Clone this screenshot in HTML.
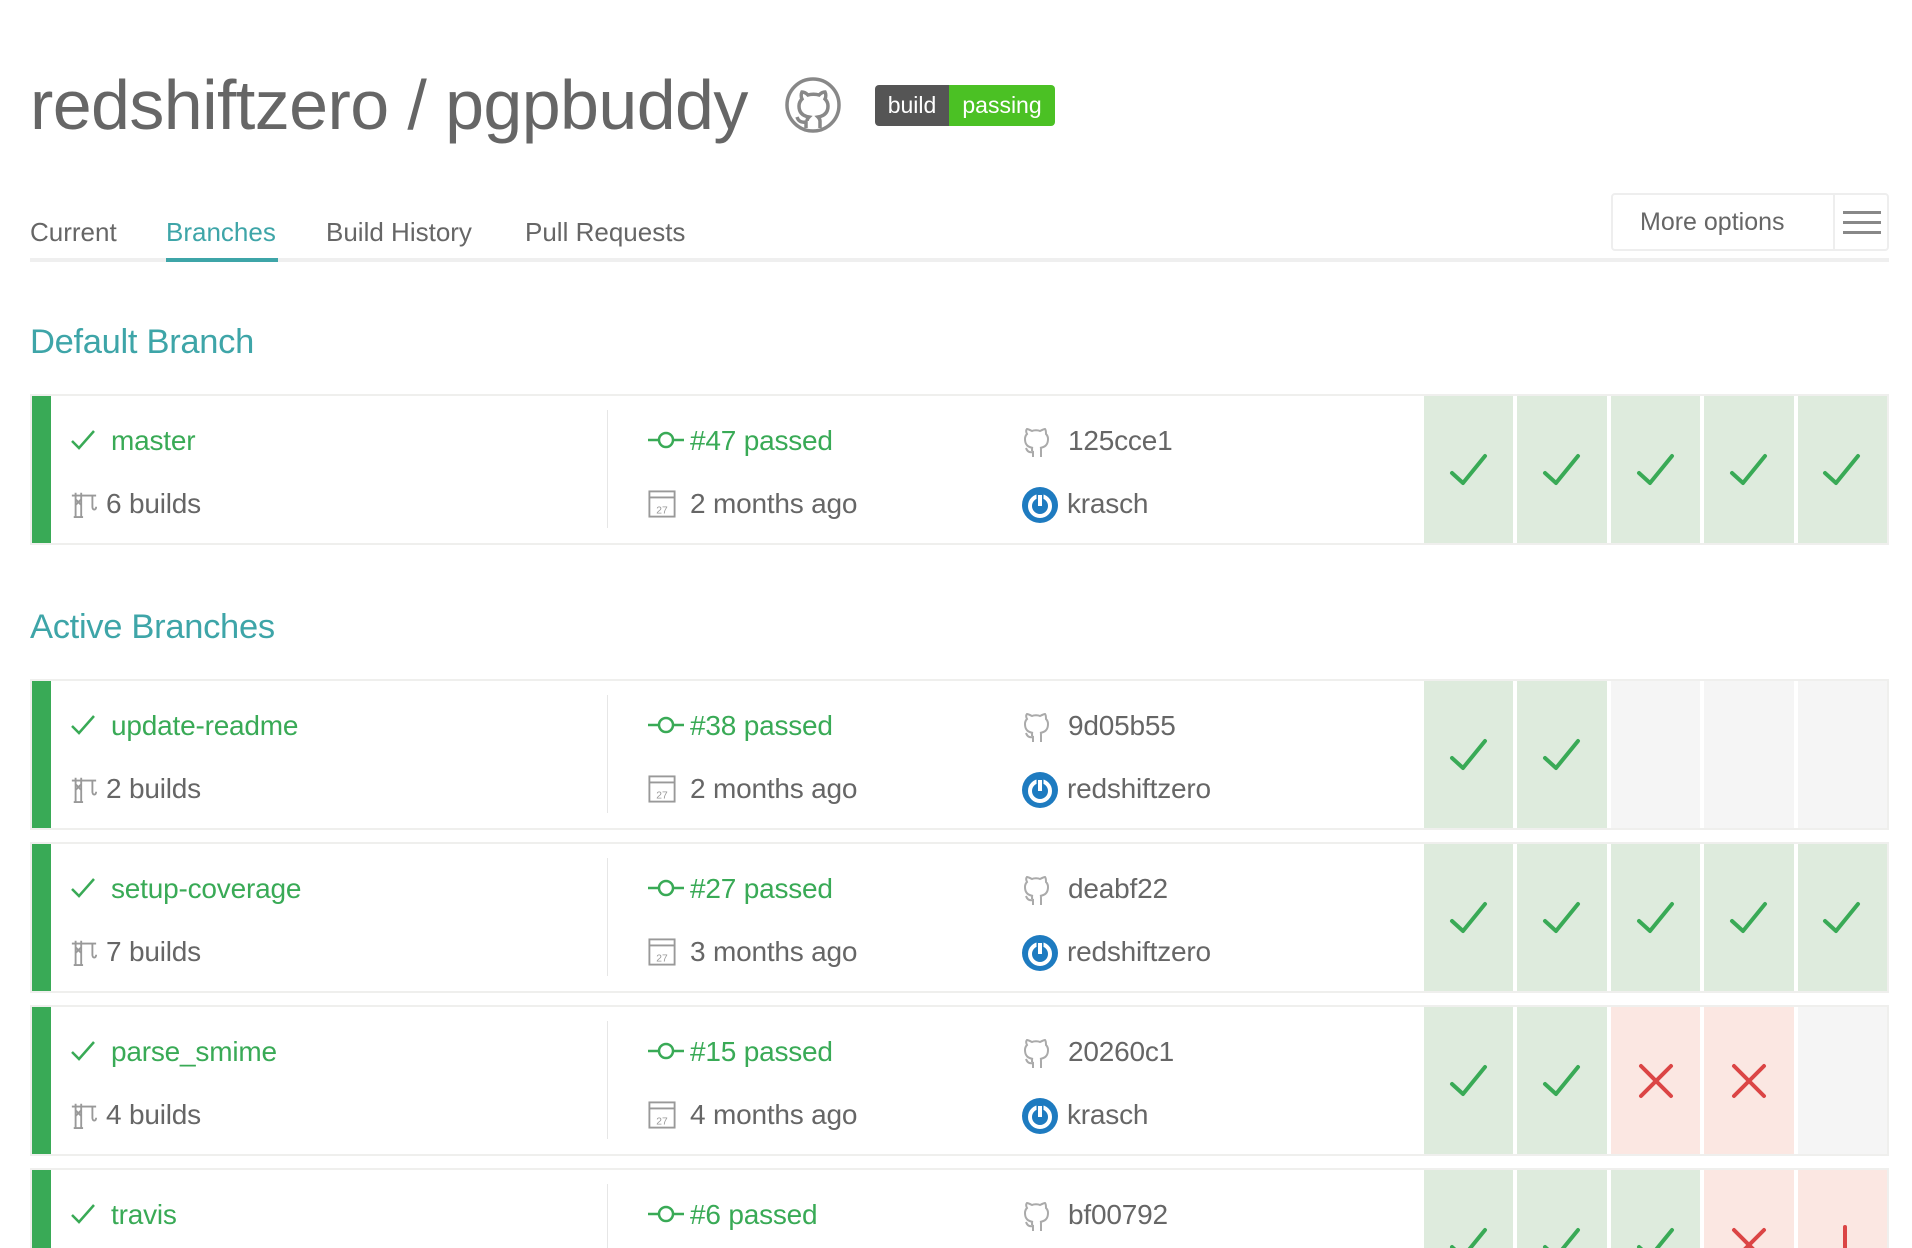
<!DOCTYPE html>
<html style="height:1248px;overflow:hidden"><head><meta charset="utf-8"><style>
body{margin:0;width:1912px;height:1248px;background:#fff;overflow:hidden;position:relative;font-family:"Liberation Sans",sans-serif;color:#666}
.a{position:absolute;white-space:nowrap}
.title{left:30px;top:62px;font-size:70px;letter-spacing:-0.6px;color:#666;line-height:86px}
.tab{top:216px;font-size:26px;line-height:32px;color:#666;letter-spacing:0px}
.h2{left:30px;font-size:34.5px;color:#3ea5a8;letter-spacing:-0.3px;line-height:40px}
.card{position:absolute;left:30px;width:1859px;height:151px;border:2px solid #efefed;box-sizing:border-box;background:#fff;overflow:hidden}
.bar{position:absolute;left:-2px;top:-2px;bottom:-2px;width:21px;background:#39aa56}
.t{position:absolute;font-size:28px;line-height:34px;white-space:nowrap;letter-spacing:-0.2px}
.g{color:#39aa56}
.div{position:absolute;left:575px;top:14px;height:118px;width:1px;background:#e6e6e6}
.cells{position:absolute;left:1392px;right:0;top:0;bottom:0;display:flex;gap:4px}
.c{flex:1;display:flex;align-items:center;justify-content:center}
.p{background:#deebdd}.f{background:#fbe7e2}.e{background:#f5f5f5}
</style></head><body>

<div class="a title">redshiftzero / pgpbuddy</div>
<svg class="a" style="left:784px;top:76px" width="58" height="58" viewBox="0 0 58 58" fill="none" stroke="#888" stroke-width="3.5">
<circle cx="29" cy="29" r="26"/>
<path d="M22 52v-6c-6 1-8-2-9-5M36 52v-7c0-2-1-3-2-4 6-1 10-4 10-11 0-3-1-5-3-7 1-2 1-5 0-7-2 0-4 1-6 3-3-1-8-1-11 0-2-2-4-3-6-3-1 2-1 5 0 7-2 2-3 4-3 7 0 7 4 10 10 11-1 1-2 2-2 4"/>
</svg>
<div class="a" style="left:875px;top:85px;width:180px;height:41px;border-radius:4px;overflow:hidden;display:flex;font-size:23px;line-height:41px;color:#fff">
<div style="background:#555;width:74px;text-align:center">build</div><div style="background:#4bc124;flex:1;text-align:center">passing</div></div>

<div class="a tab" style="left:30px">Current</div>
<div class="a tab" style="left:166px;color:#3ea5a8">Branches</div>
<div class="a tab" style="left:326px">Build History</div>
<div class="a tab" style="left:525px">Pull Requests</div>
<div class="a" style="left:30px;top:258px;width:1859px;height:4px;background:#efefef"></div>
<div class="a" style="left:166px;top:258px;width:112px;height:4px;background:#3ea5a8"></div>

<div class="a" style="left:1611px;top:193px;width:278px;height:58px;border:2px solid #eee;border-radius:4px;box-sizing:border-box">
<div class="a" style="left:27px;top:11px;font-size:25px;line-height:32px;color:#666">More options</div>
<div class="a" style="left:220px;top:0;bottom:0;width:2px;background:#eee"></div>
<div class="a" style="left:230px;top:16px;width:38px;height:3px;background:#888;box-shadow:0 10px 0 #888,0 20px 0 #888"></div>
</div>

<div class="a h2" style="top:322px">Default Branch</div>
<div class="a h2" style="top:607px">Active Branches</div>

<svg width="0" height="0" style="position:absolute">
<defs>
<symbol id="ck" viewBox="0 0 40 34"><path d="M3 20l11 10L36 3" fill="none" stroke="#39aa56" stroke-width="4" stroke-linecap="round" stroke-linejoin="round"/></symbol>
<symbol id="x" viewBox="0 0 36 36"><path d="M3 3l30 30M33 3L3 33" fill="none" stroke="#db4545" stroke-width="4" stroke-linecap="round"/></symbol>
<symbol id="sck" viewBox="0 0 26 24"><path d="M2 13l7 7L24 3" fill="none" stroke="#39aa56" stroke-width="2.5"/></symbol>
<symbol id="commit" viewBox="0 0 36 20"><path d="M0 10h10M26 10h10" stroke="#39aa56" stroke-width="2.5"/><circle cx="18" cy="10" r="7" fill="none" stroke="#39aa56" stroke-width="2.5"/></symbol>
<symbol id="cal" viewBox="0 0 30 30"><rect x="1.5" y="1.5" width="27" height="27" fill="none" stroke="#999" stroke-width="2"/><path d="M1.5 8h27" stroke="#999" stroke-width="2"/><text x="15" y="25" font-size="11" text-anchor="middle" fill="#999" font-family="Liberation Sans">27</text></symbol>
<symbol id="crane" viewBox="0 0 30 30"><path d="M2 6h26M6 3v26M12 3v26M4 29h10M6 10l6 6M12 10l-6 6M24 6v12c0 4 4 4 4 0" fill="none" stroke="#999" stroke-width="2"/></symbol>
<symbol id="gh" viewBox="0 0 30 34"><path d="M11 33v-5c-4 1-6-1-7-4M19 33v-6c0-2 0-3-1-3 5-1 8-3 8-9 0-2-1-4-2-5 0-2 0-4-1-5-1 0-3 1-5 2-2-1-6-1-8 0-2-1-4-2-5-2-1 1-1 3 0 5-1 1-2 3-2 5 0 6 3 8 8 9-1 0-1 1-1 3" fill="none" stroke="#aaa" stroke-width="2"/></symbol>
<symbol id="av" viewBox="0 0 36 36"><circle cx="18" cy="18" r="18" fill="#1e7bc0"/><circle cx="18" cy="19" r="10" fill="none" stroke="#fff" stroke-width="4"/><path d="M18 7v12" stroke="#1e7bc0" stroke-width="7"/><path d="M18 8v11" stroke="#fff" stroke-width="4"/></symbol>
</defs></svg>

<div class="card" style="top:394px">
<div class="bar"></div>
<svg class="a" style="left:38px;top:32px" width="26" height="24"><use href="#sck"/></svg>
<div class="t g" style="left:79px;top:28px">master</div>
<svg class="a" style="left:38px;top:94px" width="28" height="28"><use href="#crane"/></svg>
<div class="t" style="left:74px;top:91px">6 builds</div>
<div class="div"></div>
<svg class="a" style="left:616px;top:34px" width="36" height="20"><use href="#commit"/></svg>
<div class="t g" style="left:658px;top:28px">#47 passed</div>
<svg class="a" style="left:616px;top:94px" width="28" height="28"><use href="#cal"/></svg>
<div class="t" style="left:658px;top:91px">2 months ago</div>
<svg class="a" style="left:990px;top:28px" width="30" height="34"><use href="#gh"/></svg>
<div class="t" style="left:1036px;top:28px">125cce1</div>
<svg class="a" style="left:990px;top:91px" width="36" height="36"><use href="#av"/></svg>
<div class="t" style="left:1035px;top:91px">krasch</div>
<div class="cells"><div class="c p"><svg width="40" height="34"><use href="#ck"/></svg></div><div class="c p"><svg width="40" height="34"><use href="#ck"/></svg></div><div class="c p"><svg width="40" height="34"><use href="#ck"/></svg></div><div class="c p"><svg width="40" height="34"><use href="#ck"/></svg></div><div class="c p"><svg width="40" height="34"><use href="#ck"/></svg></div></div>
</div>

<div class="card" style="top:679px">
<div class="bar"></div>
<svg class="a" style="left:38px;top:32px" width="26" height="24"><use href="#sck"/></svg>
<div class="t g" style="left:79px;top:28px">update-readme</div>
<svg class="a" style="left:38px;top:94px" width="28" height="28"><use href="#crane"/></svg>
<div class="t" style="left:74px;top:91px">2 builds</div>
<div class="div"></div>
<svg class="a" style="left:616px;top:34px" width="36" height="20"><use href="#commit"/></svg>
<div class="t g" style="left:658px;top:28px">#38 passed</div>
<svg class="a" style="left:616px;top:94px" width="28" height="28"><use href="#cal"/></svg>
<div class="t" style="left:658px;top:91px">2 months ago</div>
<svg class="a" style="left:990px;top:28px" width="30" height="34"><use href="#gh"/></svg>
<div class="t" style="left:1036px;top:28px">9d05b55</div>
<svg class="a" style="left:990px;top:91px" width="36" height="36"><use href="#av"/></svg>
<div class="t" style="left:1035px;top:91px">redshiftzero</div>
<div class="cells"><div class="c p"><svg width="40" height="34"><use href="#ck"/></svg></div><div class="c p"><svg width="40" height="34"><use href="#ck"/></svg></div><div class="c e"></div><div class="c e"></div><div class="c e"></div></div>
</div>

<div class="card" style="top:842px">
<div class="bar"></div>
<svg class="a" style="left:38px;top:32px" width="26" height="24"><use href="#sck"/></svg>
<div class="t g" style="left:79px;top:28px">setup-coverage</div>
<svg class="a" style="left:38px;top:94px" width="28" height="28"><use href="#crane"/></svg>
<div class="t" style="left:74px;top:91px">7 builds</div>
<div class="div"></div>
<svg class="a" style="left:616px;top:34px" width="36" height="20"><use href="#commit"/></svg>
<div class="t g" style="left:658px;top:28px">#27 passed</div>
<svg class="a" style="left:616px;top:94px" width="28" height="28"><use href="#cal"/></svg>
<div class="t" style="left:658px;top:91px">3 months ago</div>
<svg class="a" style="left:990px;top:28px" width="30" height="34"><use href="#gh"/></svg>
<div class="t" style="left:1036px;top:28px">deabf22</div>
<svg class="a" style="left:990px;top:91px" width="36" height="36"><use href="#av"/></svg>
<div class="t" style="left:1035px;top:91px">redshiftzero</div>
<div class="cells"><div class="c p"><svg width="40" height="34"><use href="#ck"/></svg></div><div class="c p"><svg width="40" height="34"><use href="#ck"/></svg></div><div class="c p"><svg width="40" height="34"><use href="#ck"/></svg></div><div class="c p"><svg width="40" height="34"><use href="#ck"/></svg></div><div class="c p"><svg width="40" height="34"><use href="#ck"/></svg></div></div>
</div>

<div class="card" style="top:1005px">
<div class="bar"></div>
<svg class="a" style="left:38px;top:32px" width="26" height="24"><use href="#sck"/></svg>
<div class="t g" style="left:79px;top:28px">parse_smime</div>
<svg class="a" style="left:38px;top:94px" width="28" height="28"><use href="#crane"/></svg>
<div class="t" style="left:74px;top:91px">4 builds</div>
<div class="div"></div>
<svg class="a" style="left:616px;top:34px" width="36" height="20"><use href="#commit"/></svg>
<div class="t g" style="left:658px;top:28px">#15 passed</div>
<svg class="a" style="left:616px;top:94px" width="28" height="28"><use href="#cal"/></svg>
<div class="t" style="left:658px;top:91px">4 months ago</div>
<svg class="a" style="left:990px;top:28px" width="30" height="34"><use href="#gh"/></svg>
<div class="t" style="left:1036px;top:28px">20260c1</div>
<svg class="a" style="left:990px;top:91px" width="36" height="36"><use href="#av"/></svg>
<div class="t" style="left:1035px;top:91px">krasch</div>
<div class="cells"><div class="c p"><svg width="40" height="34"><use href="#ck"/></svg></div><div class="c p"><svg width="40" height="34"><use href="#ck"/></svg></div><div class="c f"><svg width="36" height="36"><use href="#x"/></svg></div><div class="c f"><svg width="36" height="36"><use href="#x"/></svg></div><div class="c e"></div></div>
</div>

<div class="card" style="top:1168px;height:80px;border-bottom:none">
<div class="bar" style="bottom:0"></div>
<svg class="a" style="left:38px;top:32px" width="26" height="24"><use href="#sck"/></svg>
<div class="t g" style="left:79px;top:28px">travis</div>
<div class="a" style="left:575px;top:14px;height:66px;width:1px;background:#e6e6e6"></div>
<svg class="a" style="left:616px;top:34px" width="36" height="20"><use href="#commit"/></svg>
<div class="t g" style="left:658px;top:28px">#6 passed</div>
<svg class="a" style="left:990px;top:28px" width="30" height="34"><use href="#gh"/></svg>
<div class="t" style="left:1036px;top:28px">bf00792</div>
<div class="a" style="left:1392px;right:0;top:0;height:80px;display:flex;gap:4px;overflow:hidden">
<div class="p" style="flex:1;position:relative"><svg class="a" style="left:25px;top:57px" width="40" height="34"><use href="#ck"/></svg></div>
<div class="p" style="flex:1;position:relative"><svg class="a" style="left:25px;top:57px" width="40" height="34"><use href="#ck"/></svg></div>
<div class="p" style="flex:1;position:relative"><svg class="a" style="left:25px;top:57px" width="40" height="34"><use href="#ck"/></svg></div>
<div class="f" style="flex:1;position:relative"><svg class="a" style="left:27px;top:57px" width="36" height="36"><use href="#x"/></svg></div>
<div class="f" style="flex:1;position:relative"><svg class="a" style="left:42px;top:55px" width="10" height="40"><path d="M5 2v26" stroke="#db4545" stroke-width="4" stroke-linecap="round"/></svg></div>
</div>
</div>

</body></html>
